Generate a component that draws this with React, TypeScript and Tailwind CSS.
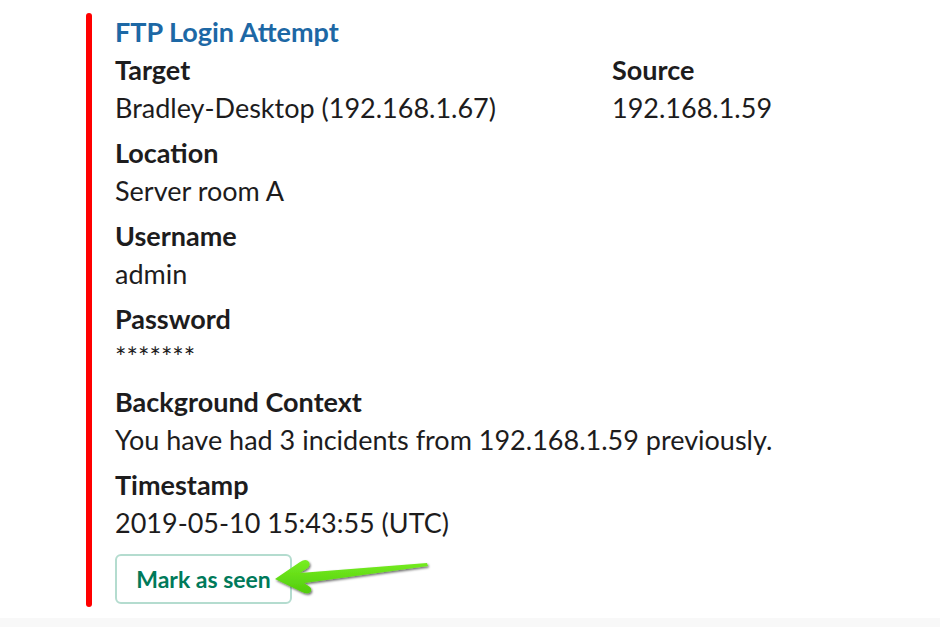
import React from "react";

const Field = ({ label, value, className = "" }: { label: string; value: string; className?: string }) => (
  <div className={className}>
    <div className="font-bold text-[27px] leading-[38px] text-[#1d1c1d]">{label}</div>
    <div className="text-[27px] leading-[38px] text-[#1d1c1d]">{value}</div>
  </div>
);

export default function App() {
  return (
    <div className="relative w-[940px] h-[627px] bg-white flex flex-col" style={{ fontFamily: "Lato, 'Noto Sans', sans-serif" }}>
      <div className="h-[618px] pt-[13px] pl-[86px]">
        <div className="flex h-[594px]">
          <div className="w-[6px] bg-[#ff0000] rounded-[3px]" />
          <div className="pl-[23px] flex flex-col">
            <div className="text-[#1d68a5] font-bold text-[27px] leading-[38px]">FTP Login Attempt</div>
            <div className="flex">
              <Field label="Target" value="Bradley-Desktop (192.168.1.67)" className="w-[497px]" />
              <Field label="Source" value="192.168.1.59" />
            </div>
            <Field label="Location" value="Server room A" className="mt-[7px]" />
            <Field label="Username" value="admin" className="mt-[7px]" />
            <Field label="Password" value="*******" className="mt-[7px]" />
            <Field label="Background Context" value="You have had 3 incidents from 192.168.1.59 previously." className="mt-[7px]" />
            <Field label="Timestamp" value="2019-05-10 15:43:55 (UTC)" className="mt-[7px]" />
            <div className="mt-[12px] flex">
              <button className="w-[177px] h-[50px] border-2 border-[#b4dccf] rounded-[6px] text-[#007a5a] font-bold text-[23px] bg-white">
                Mark as seen
              </button>
            </div>
          </div>
        </div>
      </div>
      <div className="flex-1 bg-[#f8f8f8]" />
      <svg className="absolute left-0 top-0 pointer-events-none" width="940" height="627" viewBox="0 0 940 627">
        <defs>
          <filter id="sh" x="-20%" y="-50%" width="140%" height="200%">
            <feDropShadow dx="1" dy="1.5" stdDeviation="0.8" floodColor="#000" floodOpacity="0.6" />
          </filter>
          <linearGradient id="g" x1="0" y1="0" x2="0" y2="1">
            <stop offset="0" stopColor="#77ee22" />
            <stop offset="1" stopColor="#52cc0c" />
          </linearGradient>
        </defs>
        <path
          filter="url(#sh)"
          fill="url(#g)"
          d="M275 579 L300 562 Q306 558 309 562 Q311 566 306 569 L300 573 L427 563 L428 566 L304 583 L310 587 Q313 591 309 593 Q306 594 302 592 Z"
        />
      </svg>
    </div>
  );
}
